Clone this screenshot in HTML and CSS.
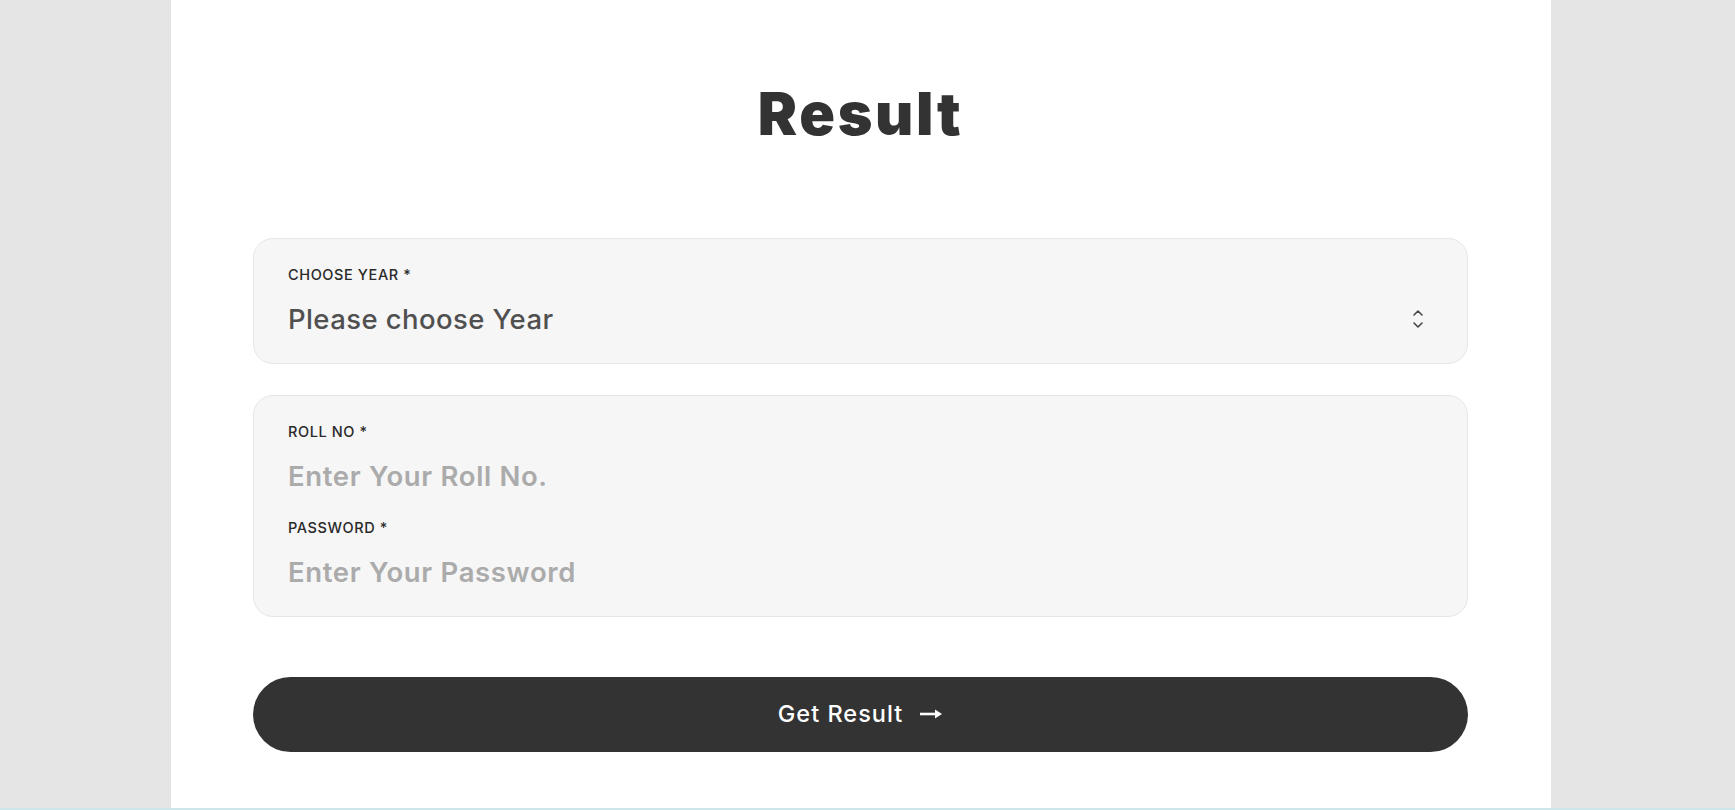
FILE: index.html
```html
<!DOCTYPE html>
<html lang="en">
<head>
<meta charset="utf-8">
<title>Result</title>
<link rel="stylesheet" href="styles.css">
</head>
<body>
<div class="page">
  <main class="panel">
    <h1 class="title">Result</h1>
    <form class="form">
      <div class="field-box">
        <div class="label">CHOOSE YEAR *</div>
        <div class="select-row">
          <span class="select-value">Please choose Year</span>
          <svg class="chevrons" width="12" height="22" viewBox="0 0 12 22" aria-hidden="true">
            <polyline points="2,7 6,3 10,7" fill="none" stroke="#444" stroke-width="1.6" stroke-linecap="round" stroke-linejoin="round"/>
            <polyline points="2,15 6,19 10,15" fill="none" stroke="#444" stroke-width="1.6" stroke-linecap="round" stroke-linejoin="round"/>
          </svg>
        </div>
      </div>
      <div class="field-box">
        <div class="label">ROLL NO *</div>
        <input class="text-input" type="text" placeholder="Enter Your Roll No.">
        <div class="label label-gap">PASSWORD *</div>
        <input class="text-input" type="password" placeholder="Enter Your Password">
      </div>
      <button class="submit" type="button">
        <span>Get Result</span>
        <svg class="arrow" width="24" height="12" viewBox="0 0 24 12" aria-hidden="true">
          <path d="M1 6 H20" stroke="#fff" stroke-width="2.6" fill="none"/>
          <path d="M16 1.5 L23 6 L16 10.5 Z" fill="#fff"/>
        </svg>
      </button>
    </form>
  </main>
  <div class="strip"></div>
</div>
</body>
</html>
```
FILE: styles.css
```css
* { box-sizing: border-box; }
html, body { margin: 0; padding: 0; }
body {
  background: #e5e5e5;
  font-family: "Inter", "Noto Sans", sans-serif;
  color: #333;
  overflow: hidden;
}
.page {
  display: flex;
  flex-direction: column;
  min-height: 810px;
}
.panel {
  background: #fff;
  width: 1380px;
  margin-left: 171px;
  height: 808px;
  padding: 78px 83px 0 82px;
}
.title {
  margin: 0;
  text-align: center;
  font-size: 59px;
  line-height: 72px;
  font-weight: 900;
  letter-spacing: 2.7px;
  color: #333;
}
.form {
  margin-top: 88px;
  display: flex;
  flex-direction: column;
}
.field-box {
  background: #f6f6f6;
  border: 1px solid #e6e6e6;
  border-radius: 20px;
  padding: 26px 34px 26px 34px;
  display: flex;
  flex-direction: column;
}
.field-box + .field-box { margin-top: 31px; }
.label {
  font-size: 14.5px;
  line-height: 20px;
  font-weight: 500;
  color: #2a2a2a;
  letter-spacing: 0.6px;
}
.label-gap { margin-top: 24px; }
.select-row {
  margin-top: 16px;
  display: flex;
  align-items: center;
  justify-content: space-between;
  height: 36px;
}
.select-value {
  font-size: 27.5px;
  line-height: 36px;
  font-weight: 500;
  letter-spacing: 0.4px;
  color: #505050;
}
.chevrons { margin-right: 9px; }
.text-input {
  margin-top: 16px;
  border: none;
  outline: none;
  background: transparent;
  padding: 0;
  height: 36px;
  font-family: "Inter", "Noto Sans", sans-serif;
  font-size: 27.5px;
  line-height: 36px;
  font-weight: 600;
  letter-spacing: 0.65px;
  color: #505050;
  width: 100%;
}
.text-input::placeholder { color: #ababab; opacity: 1; }
.submit {
  margin-top: 60px;
  height: 75px;
  border: none;
  border-radius: 38px;
  background: #333;
  color: #fff;
  font-family: "Inter", "Noto Sans", sans-serif;
  font-size: 23.5px;
  font-weight: 500;
  letter-spacing: 1px;
  display: flex;
  align-items: center;
  justify-content: center;
  gap: 16px;
  cursor: pointer;
}
.submit span { margin-top: -2px; }
.arrow { margin-top: -1px; }
.strip {
  height: 2px;
  background: #cbe7e9;
}
```
